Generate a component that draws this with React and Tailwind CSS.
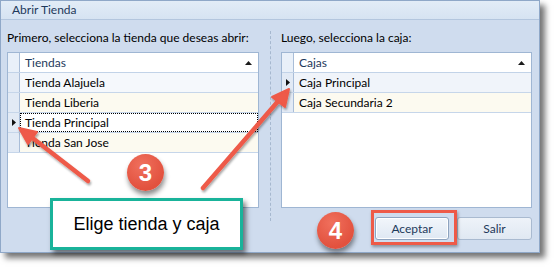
import React from "react";

const UI = { fontFamily: 'Lato, "Noto Sans", sans-serif' };

function SortUp() {
  return (
    <svg width="7" height="4" viewBox="0 0 7 4" className="mr-[6px]">
      <path d="M3.5 0 L7 4 L0 4 Z" fill="#1b1b1b" />
    </svg>
  );
}

function RowMark() {
  return (
    <svg width="4" height="7" viewBox="0 0 4 7">
      <path d="M0 0 L4 3.5 L0 7 Z" fill="#111" />
    </svg>
  );
}

function Grid({ title, rows }) {
  return (
    <div className="h-[156px] bg-white border border-[#9fb6d3] flex flex-col">
      <div className="flex h-[20px] border-b border-[#c2d3e8]">
        <div className="w-[12px] border-r border-[#a9bdd8] bg-[#e9f0f9]" />
        <div className="flex-1 flex items-center justify-between pl-[5px] text-[12px] text-[#1e395b]">
          <span>{title}</span>
          <SortUp />
        </div>
      </div>
      {rows.map((r) => (
        <div key={r.label} className="flex h-[20px] border-b border-[#c6d6ea]">
          <div className="w-[12px] border-r border-[#a9bdd8] bg-[#e2eaf5] flex items-center justify-center">
            {r.current && <RowMark />}
          </div>
          <div
            className={`flex-1 flex items-center pl-[5px] text-[12px] text-black ${r.bg} ${r.focus ? "outline outline-1 outline-dotted outline-black -outline-offset-1" : ""}`}
          >
            {r.label}
          </div>
        </div>
      ))}
    </div>
  );
}

function Badge({ n }) {
  return (
    <div className="w-[37px] h-[37px] rounded-full bg-[radial-gradient(circle_at_40%_30%,#f0705d,#e2513e_70%)] shadow-[1px_4px_5px_rgba(0,0,0,0.45)] flex items-center justify-center text-white text-[24px] font-bold" style={{ fontFamily: '"Liberation Sans", Arial, sans-serif' }}>
      {n}
    </div>
  );
}

export default function App() {
  return (
    <div className="w-[556px] h-[268px] bg-white relative overflow-hidden" style={UI}>
      {/* dialog window */}
      <div className="w-[540px] h-[253px] border border-[#8fa8c8] bg-[#cfdcee] shadow-[5px_5px_6px_rgba(0,0,0,0.55)] flex flex-col">
        <div className="h-[19px] border-b border-[#b3c6de] bg-gradient-to-b from-[#e2ecf7] to-[#d6e3f2] flex items-center pl-[11px] text-[12px] text-[#1e395b]">
          Abrir Tienda
        </div>
        <div className="flex flex-1 pt-[9px] px-[6px]">
          <div className="w-[252px] flex flex-col">
            <div className="h-[23px] text-[12px] text-black leading-[18px] whitespace-nowrap">Primero, selecciona la tienda que deseas abrir:</div>
            <Grid
              title="Tiendas"
              rows={[
                { label: "Tienda Alajuela", bg: "bg-[#f5f8fc]" },
                { label: "Tienda Liberia", bg: "bg-[#fcfaf0]" },
                { label: "Tienda Principal", bg: "bg-white", current: true, focus: true },
                { label: "Tienda San Jose", bg: "bg-[#fcfaf0]" },
              ]}
            />
          </div>
          <div className="w-[22px] flex justify-center pt-[2px] pb-[31px]">
            <div className="border-l border-dashed border-[#a6b8cf]" />
          </div>
          <div className="w-[251px] flex flex-col">
            <div className="h-[23px] text-[12px] text-black leading-[18px] whitespace-nowrap">Luego, selecciona la caja:</div>
            <Grid
              title="Cajas"
              rows={[
                { label: "Caja Principal", bg: "bg-[#f0f4fa]", current: true },
                { label: "Caja Secundaria 2", bg: "bg-[#fcfaf0]" },
              ]}
            />
            <div className="flex justify-end gap-[8px] mt-[9px]">
              <button className="w-[74px] h-[23px] rounded-[3px] border border-[#8ea3bf] bg-gradient-to-b from-[#f2f6fb] to-[#dfe8f3] text-[12px] text-[#1e395b] ring-1 ring-inset ring-white">
                Aceptar
              </button>
              <button className="w-[75px] h-[23px] rounded-[3px] border border-[#a9bad0] bg-gradient-to-b from-[#eef3f9] to-[#e0e8f2] text-[12px] text-[#1e395b]">
                Salir
              </button>
            </div>
          </div>
        </div>
      </div>

      {/* annotation: highlight around Aceptar */}
      <div className="absolute left-[371px] top-[210px] w-[86px] h-[35px] border-[3px] border-[#ee5a48] shadow-[1px_2px_3px_rgba(0,0,0,0.35)]" />

      {/* callout */}
      <div className="absolute left-[50px] top-[198px] w-[193px] h-[52px] bg-white border-[3px] border-[#19b39a] shadow-[3px_4px_5px_rgba(0,0,0,0.5)] flex items-center justify-center text-[18px] text-black" style={{ fontFamily: '"Liberation Sans", Arial, sans-serif' }}>
        Elige tienda y caja
      </div>

      {/* arrows */}
      <svg className="absolute inset-0 pointer-events-none" width="556" height="268" viewBox="0 0 556 268">
        <defs>
          <filter id="sh" x="-20%" y="-20%" width="140%" height="140%">
            <feDropShadow dx="1" dy="2" stdDeviation="1.2" floodColor="#000" floodOpacity="0.35" />
          </filter>
        </defs>
        <g filter="url(#sh)" fill="#ee5a48" stroke="#ee5a48" strokeLinecap="round" strokeLinejoin="round">
          <line x1="88" y1="181" x2="30" y2="136" strokeWidth="4.5" />
          <path d="M19 128 L37 132 L28 144 Z" strokeWidth="2" />
          <line x1="203" y1="188" x2="280" y2="99" strokeWidth="4.5" />
          <path d="M289 89 L285 107 L272 97 Z" strokeWidth="2" />
        </g>
      </svg>

      <div className="absolute left-[127px] top-[154px]">
        <Badge n="3" />
      </div>
      <div className="absolute left-[317px] top-[212px]">
        <Badge n="4" />
      </div>
    </div>
  );
}
